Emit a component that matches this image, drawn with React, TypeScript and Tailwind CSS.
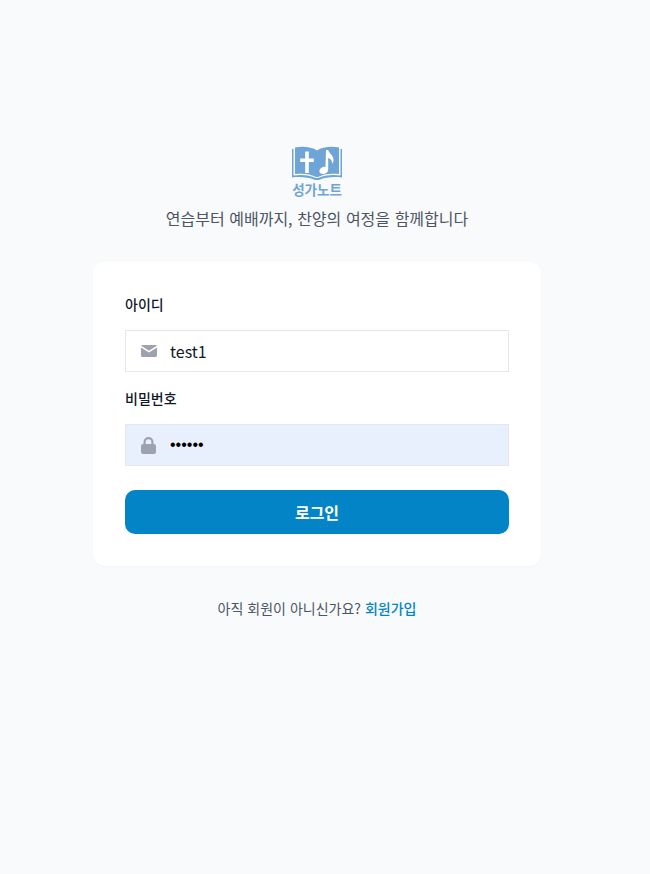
const font = { fontFamily: '"Noto Sans CJK KR", "Noto Sans", sans-serif' };

function Logo() {
  return (
    <div className="flex flex-col items-center">
      <svg width="50" height="35" viewBox="0 0 50 35" className="block">
        {/* cover */}
        <path d="M0 3h1.500v26.500c8-1.200 16-.5 22.500 2.500h2c6.500-3 14.500-3.700 22.500-2.500V3H50v28.500c-8-1-16-.5-23 2.500h-4C16 31 8 30.500 0 31.500z" fill="#6fa5d6" />
        {/* pages */}
        <path d="M3 1.500C11 0 20 1 25 4.500 30 1 39 0 47 1.500V28c-8-1-16.500 0-21 3h-2c-4.500-3-13-4-21-3z" fill="#6fa5d6" />
        {/* cross */}
        <path d="M13.200 5.500h3.600v7h5v3.600h-5V27h-3.600V16.100h-5v-3.600h5z" fill="#ffffff" />
        {/* note */}
        <path d="M34 4h2.200c.6 3.500 5.300 5 5.300 9.800 0 1.700-.6 3-1.400 4.200.4-3.500-1.900-5.300-3.900-6.300V23.500c0 2.800-2.800 4.500-5.300 4.500-2.200 0-3.500-1.200-3.500-2.800 0-2.500 2.800-4.400 5.500-4.400.2 0 .3 0 .6.100z" fill="#ffffff" />
      </svg>
      <span className="text-[13.500px] leading-[16px] font-bold text-[#6fa5d6]">성가노트</span>
    </div>
  );
}

function MailIcon() {
  return (
    <svg width="16" height="12" viewBox="0 0 16 12" className="block">
      <path d="M1.500 0h13c.6 0 1.100.3 1.300.8L8 5.800.2.800C.4.300.9 0 1.500 0z" fill="#9ca3af" />
      <path d="M0 2.400 8 7.500l8-5.100V10.500c0 .8-.7 1.500-1.500 1.500h-13C.7 12 0 11.300 0 10.500z" fill="#9ca3af" />
    </svg>
  );
}

function LockIcon() {
  return (
    <svg width="15" height="17" viewBox="0 0 15 17" className="block">
      <path d="M2.500 7V5a5 5 0 0 1 10 0v2h.5c1.100 0 2 .9 2 2v6c0 1.100-.9 2-2 2H2c-1.100 0-2-.9-2-2V9c0-1.100.9-2 2-2zm2.200 0h5.600V5a2.800 2.800 0 0 0-5.600 0z" fill="#9ca3af" />
    </svg>
  );
}

export default function App() {
  return (
    <div className="min-h-screen bg-[#f9fafb] pr-4 flex flex-col items-center pt-[146px]" style={font}>
      <Logo />
      <p className="mt-[9px] text-base leading-6 text-[#4b5563] [word-spacing:0.0625em]">연습부터 예배까지, 찬양의 여정을 함께합니다</p>

      <div className="mt-[32px] w-[448px] bg-white rounded-xl shadow-[0_1px_2px_rgba(0,0,0,0.03)] p-8">
        <label className="block text-sm leading-5 font-medium text-[#111827]">아이디</label>
        <div className="mt-4 h-[42px] border border-[#e5e7eb] bg-white flex items-center pl-[15px]">
          <MailIcon />
          <span className="ml-[13px] text-base text-[#111827]">test1</span>
        </div>
        <label className="block mt-4 text-sm leading-5 font-medium text-[#111827]">비밀번호</label>
        <div className="mt-4 h-[42px] border border-[#e5e7eb] bg-[#e8f0fe] flex items-center pl-[15px]">
          <LockIcon />
          <span className="ml-[14px] text-base text-black" style={{ fontFamily: '"Liberation Sans", sans-serif' }}>••••••</span>
        </div>
        <button className="mt-6 w-full h-[44px] rounded-[10px] bg-[#0284c7] text-white text-base font-semibold">로그인</button>
      </div>

      <p className="mt-[32px] text-sm leading-5 text-[#4b5563] [word-spacing:0.0625em]">
        아직 회원이 아니신가요? <span className="font-medium text-[#0284c7]">회원가입</span>
      </p>
    </div>
  );
}
